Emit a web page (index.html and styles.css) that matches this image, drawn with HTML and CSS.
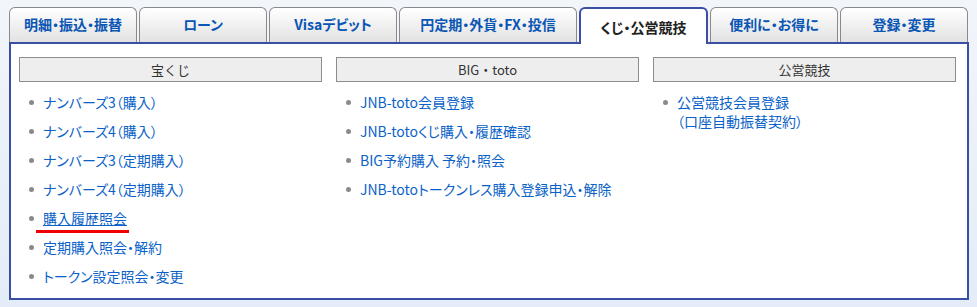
FILE: index.html
```html
<!DOCTYPE html>
<html lang="ja">
<head>
  <meta charset="UTF-8">
  <meta name="viewport" content="width=device-width, initial-scale=1.0">
  <title>くじ・公営競技</title>
  <link rel="stylesheet" href="styles.css">
</head>
<body>
  <!-- タブ -->
  <div class="tabs">
    <a class="tab" href="#">明細・振込・振替</a>
    <a class="tab" href="#">ローン</a>
    <a class="tab" href="#">Visaデビット</a>
    <a class="tab tab-wide" href="#">円定期・外貨・FX・投信</a>
    <a class="tab active" href="#">くじ・公営競技</a>
    <a class="tab" href="#">便利に・お得に</a>
    <a class="tab" href="#">登録・変更</a>
  </div>

  <!-- メニュー -->
  <div class="panel">
    <div class="col">
      <div class="col-head">宝くじ</div>
      <ul>
        <li><a href="#">ナンバーズ3（購入）</a></li>
        <li><a href="#">ナンバーズ4（購入）</a></li>
        <li><a href="#">ナンバーズ3（定期購入）</a></li>
        <li><a href="#">ナンバーズ4（定期購入）</a></li>
        <li class="marked"><a class="hover" href="#">購入履歴照会</a></li>
        <li><a href="#">定期購入照会・解約</a></li>
        <li><a href="#">トークン設定照会・変更</a></li>
      </ul>
    </div>
    <div class="col">
      <div class="col-head">BIG・toto</div>
      <ul>
        <li><a href="#">JNB-toto会員登録</a></li>
        <li><a href="#">JNB-totoくじ購入・履歴確認</a></li>
        <li><a href="#">BIG予約購入 予約・照会</a></li>
        <li><a href="#">JNB-totoトークンレス購入登録申込・解除</a></li>
      </ul>
    </div>
    <div class="col">
      <div class="col-head">公営競技</div>
      <ul>
        <li><a href="#">公営競技会員登録<br>（口座自動振替契約）</a></li>
      </ul>
    </div>
  </div>
</body>
</html>
```

FILE: styles.css
```css
* {
  box-sizing: border-box;
  margin: 0;
  padding: 0;
}
body {
  font-family: "Noto Sans CJK JP", "Liberation Sans", sans-serif;
  background: linear-gradient(180deg, #f2f5fa, #e3ecf8);
  min-height: 100vh;
  color: #333;
}
.tabs {
  display: flex;
  align-items: flex-end;
  gap: 2px;
  padding: 7px 0 0 9px;
}
.tab {
  display: flex;
  align-items: center;
  justify-content: center;
  width: 128px;
  height: 35px;
  padding-bottom: 2px;
  border: 1px solid #8a8a8a;
  border-bottom: none;
  border-radius: 6px 6px 0 0;
  background: linear-gradient(180deg, #ffffff, #e2e2e2);
  color: #0a56b4;
  font-size: 14px;
  font-weight: bold;
  font-feature-settings: "palt";
  text-decoration: none;
}
.tab-wide {
  width: 178px;
}
.tab.active {
  position: relative;
  z-index: 1;
  width: 129px;
  height: 37px;
  margin-bottom: -2px;
  padding-bottom: 0;
  border: 2px solid #3a4fa4;
  border-bottom: none;
  background: #fff;
  color: #222;
}
.panel {
  display: grid;
  grid-template-columns: repeat(3, 303px);
  column-gap: 14px;
  align-items: start;
  width: 960px;
  height: 258px;
  margin-left: 9px;
  padding: 13px 11px 0 8px;
  border: 2px solid #3a4fa4;
  background: #fff;
}
.col-head {
  height: 25px;
  border: 1px solid #8c8c8c;
  background: #eeeeee;
  font-size: 13px;
  line-height: 23px;
  text-align: center;
  color: #333;
}
ul {
  list-style: none;
  margin-top: 11px;
}
li {
  position: relative;
  display: flex;
  margin-bottom: 10px;
  font-size: 14px;
  line-height: 19px;
  font-feature-settings: "palt";
}
li::before {
  content: "";
  flex: none;
  width: 5px;
  height: 5px;
  margin: 7px 9px 0 10px;
  border-radius: 50%;
  background: #8a8a8a;
}
li a {
  color: #0a62c8;
  text-decoration: none;
}
li a.hover {
  text-decoration: underline;
}
/* 赤線の注記 */
li.marked::after {
  content: "";
  position: absolute;
  left: 17px;
  top: 21px;
  width: 93px;
  height: 3px;
  background: #f00000;
}
```
